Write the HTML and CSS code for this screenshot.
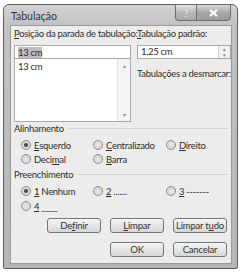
FILE: index.html
```html
<!DOCTYPE html>
<html lang="pt">
<head>
    <meta charset="UTF-8">
    <title>Tabulação</title>
    <link rel="stylesheet" href="styles.css">
</head>
<body>
    <div class="window">
        <div class="titlebar">
            <span class="title">Tabulação</span>
            <div class="caption-buttons">
                <span class="cap-btn help">?</span>
                <span class="cap-btn close">
                    <svg width="9" height="8" viewBox="0 0 9 8"><path d="M1 1 L8 7 M8 1 L1 7" stroke="#fff" stroke-width="2"/></svg>
                </span>
            </div>
        </div>
        <div class="client">
            <div class="top">
                <div class="col-left">
                    <label class="lbl"><u>P</u>osição da parada de tabulação:</label>
                    <div class="textbox first"><span class="sel">13 cm</span></div>
                    <div class="listbox">
                        <div class="list-items">13 cm</div>
                        <div class="scrollbar">
                            <span class="arrow">&#9652;</span>
                            <span class="arrow">&#9662;</span>
                        </div>
                    </div>
                </div>
                <div class="col-right">
                    <label class="lbl"><u>T</u>abulação padrão:</label>
                    <div class="textbox spin">
                        <span>1,25 cm</span>
                        <div class="spinner">
                            <span>&#9652;</span>
                            <span>&#9662;</span>
                        </div>
                    </div>
                    <p class="clear-label">Tabulações a desmarcar:</p>
                </div>
            </div>

            <div class="group-title"><span>Alinhamento</span></div>
            <div class="radios align">
                <div class="radio"><span class="dot checked"></span><span><u>E</u>squerdo</span></div>
                <div class="radio"><span class="dot"></span><span><u>C</u>entralizado</span></div>
                <div class="radio"><span class="dot"></span><span><u>D</u>ireito</span></div>
                <div class="radio"><span class="dot"></span><span>Deci<u>m</u>al</span></div>
                <div class="radio"><span class="dot"></span><span><u>B</u>arra</span></div>
            </div>

            <div class="group-title"><span>Preenchimento</span></div>
            <div class="radios fill">
                <div class="radio"><span class="dot checked"></span><span><u>1</u> Nenhum</span></div>
                <div class="radio"><span class="dot"></span><span><u>2</u> .......</span></div>
                <div class="radio"><span class="dot"></span><span><u>3</u> -------</span></div>
                <div class="radio"><span class="dot"></span><span><u>4</u> ____</span></div>
            </div>

            <div class="buttons">
                <button>De<u>f</u>inir</button>
                <button><u>L</u>impar</button>
                <button>Limpar t<u>u</u>do</button>
            </div>
            <div class="buttons second">
                <button>OK</button>
                <button>Cancelar</button>
            </div>
        </div>
    </div>
</body>
</html>
```

FILE: styles.css
```css
* {
    margin: 0;
    padding: 0;
    box-sizing: border-box;
}
body {
    background: #fff;
    font-family: 'Lato', 'Liberation Sans', sans-serif;
    font-size: 9.5px;
    letter-spacing: -0.3px;
    color: #2e2e2e;
}
u {
    text-decoration: underline;
    text-underline-offset: 1px;
}
.window {
    margin: 4px 0 0 3px;
    width: 235px;
    height: 265px;
    border: 1px solid #5e5e5e;
    border-radius: 6px 6px 2px 2px;
    background: linear-gradient(to bottom, #d2d2d2 0, #c2c2c2 20px, #b5b5b5 100%);
    padding: 0 5px 4px 6px;
    display: flex;
    flex-direction: column;
}
.titlebar {
    height: 20px;
    display: flex;
    align-items: flex-start;
    justify-content: space-between;
}
.title {
    font-size: 10.5px;
    letter-spacing: 0;
    color: #333;
    margin: 5px 0 0 1px;
}
.caption-buttons {
    display: flex;
    margin-top: -1px;
    margin-right: 1px;
}
.cap-btn {
    height: 17px;
    display: flex;
    align-items: center;
    justify-content: center;
    border: 1px solid #6b6b6b;
    background: linear-gradient(to bottom, #e4e4e4, #b9b9b9 50%, #a9a9a9);
    color: #fff;
    font-size: 10px;
    font-weight: bold;
}
.help {
    width: 21px;
    border-radius: 0 0 0 4px;
    border-right: none;
    text-shadow: 0 0 1px #555;
}
.close {
    width: 35px;
    border-radius: 0 0 4px 0;
    background: linear-gradient(to bottom, #d8d8d8, #a8a8a8 50%, #9c9c9c);
}
.client {
    flex: 1;
    background: #ececec;
    border: 1px solid #9a9a9a;
    padding: 0 2px 0 3px;
}
.top {
    display: flex;
    gap: 6px;
}
.col-left {
    width: 117px;
}
.col-right {
    width: 94px;
}
.lbl {
    display: block;
    height: 15px;
    line-height: 15px;
    white-space: nowrap;
}
.textbox {
    height: 14px;
    margin-top: 4px;
    border: 1px solid #a9a9a9;
    background: #fff;
    padding: 0 3px;
    line-height: 12px;
    display: flex;
    align-items: center;
}
.sel {
    background: #bdbdbd;
    line-height: 11px;
}
.listbox {
    height: 63px;
    border: 1px solid #a9a9a9;
    border-top: none;
    background: #fff;
    display: flex;
}
.list-items {
    flex: 1;
    padding: 2px 3px;
}
.scrollbar {
    width: 13px;
    background: #f4f4f4;
    border-left: 1px solid #e2e2e2;
    display: flex;
    flex-direction: column;
    justify-content: space-between;
    align-items: center;
    padding: 3px 0 2px;
}
.arrow {
    font-size: 6px;
    color: #8a8a8a;
    line-height: 8px;
}
.spin {
    justify-content: space-between;
    padding-right: 0;
}
.spinner {
    width: 12px;
    height: 12px;
    display: flex;
    flex-direction: column;
    align-items: center;
    border-left: 1px solid #d0d0d0;
    background: #f2f2f2;
    font-size: 5px;
    line-height: 6px;
    color: #777;
}
.clear-label {
    margin-top: 8px;
    line-height: 13px;
    white-space: nowrap;
}
.group-title {
    display: flex;
    align-items: center;
    gap: 4px;
    height: 14px;
    margin-top: -1px;
}
.group-title::after {
    content: '';
    flex: 1;
    border-top: 1px solid #d6d6d6;
    margin-right: 1px;
}
.radios {
    display: grid;
    grid-template-columns: 72px 73px 60px;
    padding: 4px 0 3px 7px;
}
.radios.align {
    row-gap: 2px;
}
.radios.fill {
    row-gap: 3px;
    padding-bottom: 0;
}
.radio {
    display: flex;
    align-items: center;
    gap: 3px;
    height: 12px;
    white-space: nowrap;
}
.dot {
    width: 10px;
    height: 10px;
    flex: none;
    border-radius: 50%;
    border: 1px solid #8d8d8d;
    background: radial-gradient(circle, #e6e6e6 0, #d2d2d2 100%);
    display: flex;
    align-items: center;
    justify-content: center;
}
.dot.checked::after {
    content: '';
    width: 4px;
    height: 4px;
    border-radius: 50%;
    background: #444;
}
.buttons {
    display: flex;
    justify-content: flex-end;
    gap: 9px;
    padding-right: 2px;
    margin-top: 6px;
}
.buttons.second {
    margin-top: 9px;
}
button {
    width: 54px;
    height: 15px;
    border: 1px solid #767676;
    border-radius: 3px;
    background: linear-gradient(to bottom, #f4f4f4, #e6e6e6 50%, #d6d6d6);
    font-family: 'Lato', 'Liberation Sans', sans-serif;
    font-size: 9.5px;
    letter-spacing: -0.2px;
    color: #333;
    line-height: 12px;
    white-space: nowrap;
}
```
